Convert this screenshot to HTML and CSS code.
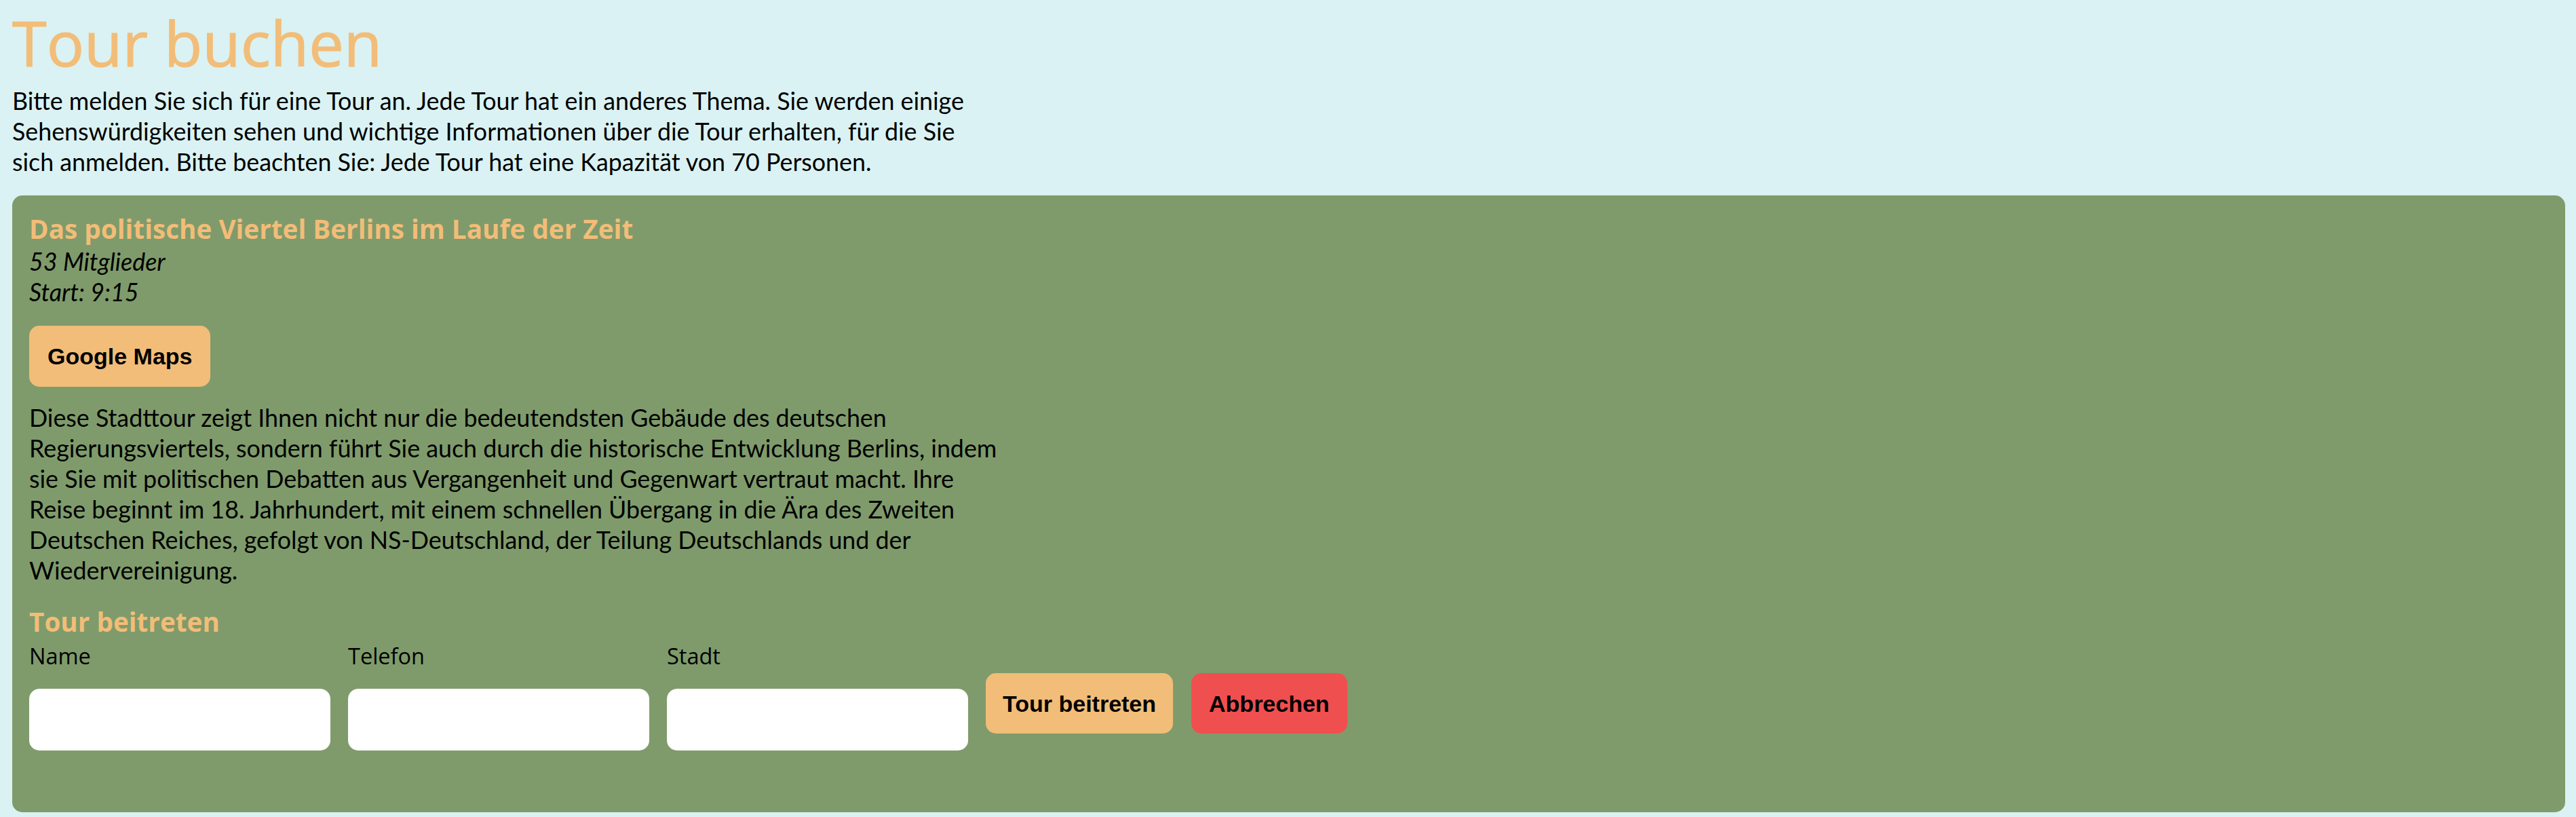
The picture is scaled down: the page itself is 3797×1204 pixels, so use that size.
FILE: index.html
```html
<!DOCTYPE html>
<html lang="de">
<head>
<meta charset="utf-8">
<title>Tour buchen</title>
<link rel="stylesheet" href="styles.css">
</head>
<body>
  <h1 class="page-title">Tour buchen</h1>
  <p class="intro">Bitte melden Sie sich für eine Tour an. Jede Tour hat ein anderes Thema. Sie werden einige Sehenswürdigkeiten sehen und wichtige Informationen über die Tour erhalten, für die Sie sich anmelden. Bitte beachten Sie: Jede Tour hat eine Kapazität von 70 Personen.</p>

  <section class="tour-card">
    <h2 class="tour-title">Das politische Viertel Berlins im Laufe der Zeit</h2>
    <div class="tour-meta">
      <div>53 Mitglieder</div>
      <div>Start: 9:15</div>
    </div>
    <button class="btn btn-maps" type="button">Google Maps</button>
    <p class="tour-desc">Diese Stadttour zeigt Ihnen nicht nur die bedeutendsten Gebäude des deutschen Regierungsviertels, sondern führt Sie auch durch die historische Entwicklung Berlins, indem sie Sie mit politischen Debatten aus Vergangenheit und Gegenwart vertraut macht. Ihre Reise beginnt im 18. Jahrhundert, mit einem schnellen Übergang in die Ära des Zweiten Deutschen Reiches, gefolgt von NS-Deutschland, der Teilung Deutschlands und der Wiedervereinigung.</p>

    <h3 class="join-title">Tour beitreten</h3>
    <form class="join-form">
      <div class="field">
        <label class="field-label" for="name">Name</label>
        <input class="field-input" id="name" type="text">
      </div>
      <div class="field">
        <label class="field-label" for="tel">Telefon</label>
        <input class="field-input" id="tel" type="text">
      </div>
      <div class="field">
        <label class="field-label" for="city">Stadt</label>
        <input class="field-input" id="city" type="text">
      </div>
      <button class="btn btn-join" type="button">Tour beitreten</button>
      <button class="btn btn-cancel" type="button">Abbrechen</button>
    </form>
  </section>
</body>
</html>
```
FILE: styles.css
```css
html, body {
  background: #daf2f3;
}
body {
  margin: 0 16px 0 18px;
  font-family: Lato, "Open Sans", sans-serif;
  font-size: 35.8px;
  line-height: 45px;
  color: #000;
}
.page-title {
  margin: 8px 0 0;
  font-family: "Open Sans", sans-serif;
  font-weight: 400;
  font-size: 92px;
  line-height: 110px;
  color: #f2bd78;
  -webkit-text-stroke: 1.2px #f2bd78;
}
.intro {
  margin: 8px 0 0;
  max-width: 1452px;
}
.tour-card {
  margin-top: 27px;
  background: #7f9b6b;
  border-radius: 15px;
  padding: 27px 25px 91px;
}
.tour-title,
.join-title {
  margin: 0;
  font-family: "Open Sans", sans-serif;
  font-weight: 700;
  font-size: 38.7px;
  line-height: 45px;
  color: #f2bd78;
}
.tour-meta {
  margin-top: 3px;
  font-style: italic;
}
.btn {
  display: inline-block;
  border: none;
  border-radius: 15px;
  font-family: "Liberation Sans", Arial, sans-serif;
  font-weight: 700;
  font-size: 34px;
  line-height: 40px;
  color: #000;
  cursor: pointer;
}
.btn-maps {
  margin-top: 27px;
  height: 90px;
  padding: 0 27px;
  background: #f2bd78;
}
.tour-desc {
  margin: 23px 0 0;
  max-width: 1452px;
}
.join-title {
  margin-top: 31px;
}
.join-form {
  display: flex;
  align-items: flex-start;
  gap: 26px;
  margin-top: 5px;
}
.field {
  display: flex;
  flex-direction: column;
  width: 444px;
}
.field-label {
  font-family: "Open Sans", sans-serif;
  font-size: 32.5px;
  line-height: 45px;
}
.field-input {
  margin-top: 26px;
  height: 91px;
  border: none;
  border-radius: 15px;
  background: #fff;
  padding: 0 16px;
  font-size: 32px;
  box-sizing: border-box;
}
.btn-join,
.btn-cancel {
  margin-top: 48px;
  height: 89px;
  padding: 0 25px;
}
.btn-join {
  background: #f2bd78;
}
.btn-cancel {
  margin-left: 1px;
  padding: 0 26px;
  background: #f04f4f;
}
```
